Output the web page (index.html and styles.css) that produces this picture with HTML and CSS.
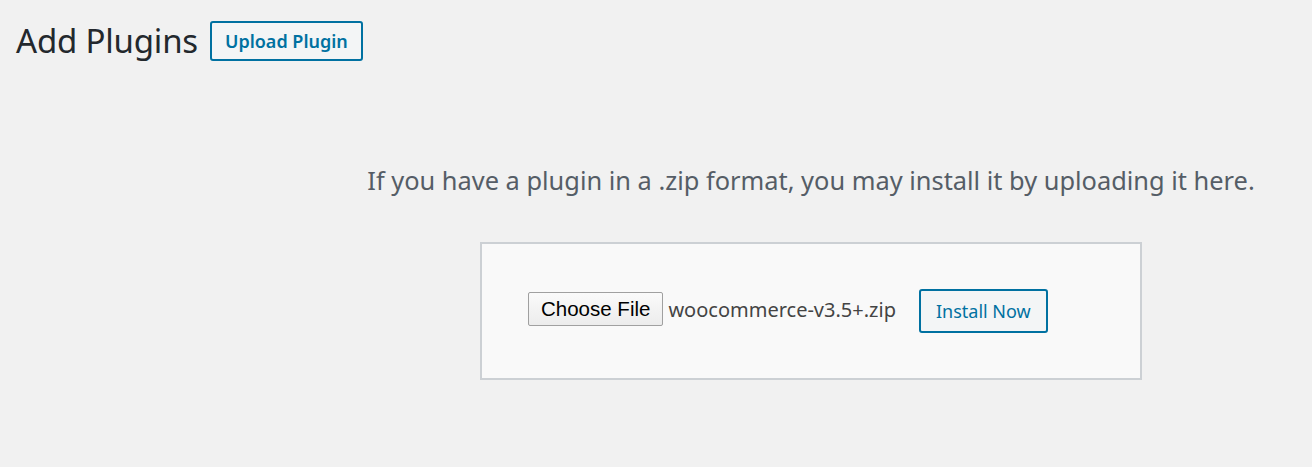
FILE: index.html
```html
<!DOCTYPE html>
<html lang="en">
<head>
  <meta charset="UTF-8">
  <title>Add Plugins</title>
  <link rel="stylesheet" href="styles.css">
</head>
<body>
<div class="wrap">
  <div class="page-head">
    <h1>Add Plugins</h1>
    <a class="upload-toggle" href="#">Upload Plugin</a>
  </div>

  <div class="upload-plugin">
    <p class="install-help">If you have a plugin in a .zip format, you may install it by uploading it here.</p>
    <form class="upload-form">
      <span class="file-btn">Choose File</span>
      <span class="file-name">woocommerce-v3.5+.zip</span>
      <button type="button" class="install-btn">Install Now</button>
    </form>
  </div>
</div>
</body>
</html>
```

FILE: styles.css
```css
body {
  margin: 0;
  background: #f1f1f1;
  font-family: "Noto Sans", "Open Sans", sans-serif;
  color: #23282d;
}
.wrap {
  padding: 20px 0 0 16px;
}
.page-head {
  display: flex;
  align-items: center;
  gap: 12px;
}
h1 {
  margin: 0;
  font-size: 33px;
  font-weight: 400;
  line-height: 42px;
  letter-spacing: -0.2px;
  color: #23282d;
}
.upload-toggle {
  display: inline-block;
  box-sizing: border-box;
  height: 40px;
  padding: 0 13px;
  line-height: 36px;
  border: 2px solid #0071a1;
  border-radius: 3px;
  background: #f3f5f6;
  color: #0071a1;
  font-size: 18px;
  font-weight: 600;
  text-decoration: none;
}
.upload-plugin {
  margin-left: 294px;
  display: flex;
  flex-direction: column;
  align-items: center;
}
.install-help {
  margin: 0;
  padding-top: 100px;
  font-size: 25.4px;
  line-height: 36px;
  color: #555d66;
}
.upload-form {
  box-sizing: border-box;
  width: 662px;
  height: 138px;
  margin-top: 44px;
  display: flex;
  align-items: center;
  padding-left: 46px;
  background: #f9f9f9;
  border: 2px solid #ccd0d4;
}
.file-btn {
  box-sizing: border-box;
  height: 34px;
  margin-bottom: 4px;
  padding: 0 12px;
  line-height: 32px;
  border: 1px solid #a0a0a0;
  border-radius: 2px;
  background: linear-gradient(#fafafa, #ececec);
  font-family: "Liberation Sans", Arial, sans-serif;
  font-size: 20.5px;
  color: #000;
}
.file-name {
  margin: 0 0 4px 5px;
  font-size: 20px;
  color: #444;
}
.install-btn {
  box-sizing: border-box;
  height: 44px;
  margin-left: 23px;
  padding: 0 15px;
  border: 2px solid #0071a1;
  border-radius: 3px;
  background: #f3f5f6;
  color: #0071a1;
  font-family: "Noto Sans", "Open Sans", sans-serif;
  font-size: 18px;
  cursor: pointer;
}
```
